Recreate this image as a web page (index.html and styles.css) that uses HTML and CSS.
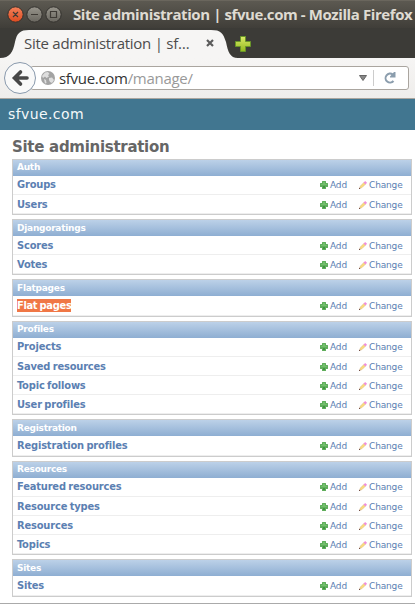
FILE: index.html
```html
<!DOCTYPE html>
<html lang="en">
<head>
<meta charset="utf-8">
<title>Site administration | sfvue.com</title>
<link rel="stylesheet" href="styles.css">
</head>
<body>
<svg class="defs" width="0" height="0">
  <symbol id="add" viewBox="0 0 8 8">
    <path fill="#5fad5b" d="M2.500 0h3q.5 0 .5.500V2h1.500q.5 0 .5.500v3q0 .5-.5.500H6v1.500q0 .5-.5.500h-3Q2 8 2 7.500V6H.5Q0 6 0 5.500v-3Q0 2 .5 2H2V.5q0-.5.5-.5z"/>
    <path fill="#72bf6b" d="M3 1h2v2h2v1H1V3h2z"/>
    <path fill="#429541" d="M3 5h2v2H3z"/>
  </symbol>
  <symbol id="change" viewBox="0 0 8 8">
    <path d="M.8 7.200 1.400 5 5 1.400 6.600 3 3 6.600z" fill="#fbdc7c" stroke="#d5b17a" stroke-width=".5"/>
    <path d="M4.600 1.500 6.200 0 8 1.800 6.500 3.400z" fill="#ef8fdc"/>
    <path d="M0 8V6.500L1.500 8z" fill="#61362c"/>
  </symbol>
</svg>
<header class="titlebar">
  <svg class="controls" width="62" height="28" viewBox="0 0 62 28">
    <defs><linearGradient id="red" x2="0" y2="1"><stop stop-color="#f4815a"/><stop offset="1" stop-color="#dd4b20"/></linearGradient>
    <linearGradient id="gray" x2="0" y2="1"><stop stop-color="#98958c"/><stop offset="1" stop-color="#69665f"/></linearGradient></defs>
    <g stroke="#33312d"><circle cx="15.500" cy="14.500" r="7.700" fill="url(#red)"/><circle cx="34.500" cy="14.500" r="7.700" fill="url(#gray)"/><circle cx="53.500" cy="14.500" r="7.700" fill="url(#gray)"/></g>
    <path d="m13 12 5 5m0-5-5 5M31 14.500h7M50.500 11.500h6v6h-6z" fill="none" stroke="#3e3a35" stroke-width="1.200"/>
  </svg>
  <span class="window-title">Site administration | sfvue.com - Mozilla Firefox</span>
</header>
<div class="tabs">
  <div class="tab">
    <svg class="tab-shape" width="238" height="30" viewBox="0 0 238 30"><path d="M0 30C10 30 13 24 15 14 17 5 20 2 29 2H211C221 2 223 5 226 14 228 24 230 30 238 30z" fill="#f6f5f4"/></svg>
    <div class="tab-content"><span class="tab-title">Site administration | sf…</span>
      <svg width="8" height="8" viewBox="0 0 8 8"><path d="m1 1 6 6m0-6-6 6" stroke="#5b5b5b" stroke-width="2.200"/></svg></div>
  </div>
  <svg class="new-tab" width="16" height="16" viewBox="0 0 16 16"><defs><linearGradient id="lime" x2="0" y2="1"><stop stop-color="#dceb69"/><stop offset="1" stop-color="#91b91d"/></linearGradient></defs><path d="M5.500.5h5v5h5v5h-5v5h-5v-5h-5v-5h5z" fill="url(#lime)" stroke="#689529"/></svg>
</div>
<nav class="toolbar">
  <svg class="back" width="32" height="32" viewBox="0 0 32 32"><circle cx="16" cy="16" r="15.500" fill="#f9f9f9" stroke="#8999ac"/><path d="M11 16h12M16.500 10l-6 6 6 6" fill="none" stroke="#484848" stroke-width="3.600" stroke-linecap="round"/></svg>
  <div class="url">
    <svg width="14" height="14" viewBox="0 0 14 14"><circle cx="7" cy="7" r="7" fill="#a3a3a3"/><path d="M4 1.500 7 1l1.500 2L7 4l1 1.500L5.500 7 4 5.500 2 7 1 5zM8 7l3-.5L13 9l-2 3-2-1-1-2zM3 8l2 1 .5 3L4 12.500z" fill="#dedede"/></svg>
    <span class="address">sfvue.com<i>/manage/</i></span>
    <svg class="drop" width="8" height="6" viewBox="0 0 8 6"><path d="M.5.5h7L4 5.500z" fill="#888" stroke="#666"/></svg>
    <svg class="reload" width="12" height="12" viewBox="0 0 12 12"><path d="M9.500 9A4.500 4.500 0 1 1 8.800 2.500" fill="none" stroke="#8b9dad" stroke-width="2"/><path d="M11.500 0v5.500H6V4.500L10 0z" fill="#8b9dad"/></svg>
  </div>
</nav>
<div class="brand">sfvue.com</div>
<main>
  <h1>Site administration</h1>
  <section class="snug"><h2>Auth</h2>
    <div class="row"><b>Groups</b><a class="add"><svg><use href="#add"/></svg>Add</a><a><svg><use href="#change"/></svg>Change</a></div>
    <div class="row"><b>Users</b><a class="add"><svg><use href="#add"/></svg>Add</a><a><svg><use href="#change"/></svg>Change</a></div>
  </section>
  <section><h2>Djangoratings</h2>
    <div class="row"><b>Scores</b><a class="add"><svg><use href="#add"/></svg>Add</a><a><svg><use href="#change"/></svg>Change</a></div>
    <div class="row"><b>Votes</b><a class="add"><svg><use href="#add"/></svg>Add</a><a><svg><use href="#change"/></svg>Change</a></div>
  </section>
  <section class="single"><h2>Flatpages</h2>
    <div class="row"><b class="selected">Flat pages</b><a class="add"><svg><use href="#add"/></svg>Add</a><a><svg><use href="#change"/></svg>Change</a></div>
  </section>
  <section class="snug"><h2>Profiles</h2>
    <div class="row"><b>Projects</b><a class="add"><svg><use href="#add"/></svg>Add</a><a><svg><use href="#change"/></svg>Change</a></div>
    <div class="row"><b>Saved resources</b><a class="add"><svg><use href="#add"/></svg>Add</a><a><svg><use href="#change"/></svg>Change</a></div>
    <div class="row"><b>Topic follows</b><a class="add"><svg><use href="#add"/></svg>Add</a><a><svg><use href="#change"/></svg>Change</a></div>
    <div class="row"><b>User profiles</b><a class="add"><svg><use href="#add"/></svg>Add</a><a><svg><use href="#change"/></svg>Change</a></div>
  </section>
  <section class="single"><h2>Registration</h2>
    <div class="row"><b>Registration profiles</b><a class="add"><svg><use href="#add"/></svg>Add</a><a><svg><use href="#change"/></svg>Change</a></div>
  </section>
  <section class="snug"><h2>Resources</h2>
    <div class="row"><b>Featured resources</b><a class="add"><svg><use href="#add"/></svg>Add</a><a><svg><use href="#change"/></svg>Change</a></div>
    <div class="row"><b>Resource types</b><a class="add"><svg><use href="#add"/></svg>Add</a><a><svg><use href="#change"/></svg>Change</a></div>
    <div class="row"><b>Resources</b><a class="add"><svg><use href="#add"/></svg>Add</a><a><svg><use href="#change"/></svg>Change</a></div>
    <div class="row"><b>Topics</b><a class="add"><svg><use href="#add"/></svg>Add</a><a><svg><use href="#change"/></svg>Change</a></div>
  </section>
  <section class="single"><h2>Sites</h2>
    <div class="row"><b>Sites</b><a class="add"><svg><use href="#add"/></svg>Add</a><a><svg><use href="#change"/></svg>Change</a></div>
  </section>
</main>
</body>
</html>
```
FILE: styles.css
```css
* { box-sizing: border-box; }
body { margin: 0; height: 604px; overflow: hidden; display: flex; flex-direction: column; background: #fff; font-family: "DejaVu Sans", sans-serif; border-bottom: 1px solid #aaa; }
svg { display: block; flex: none; }
.defs { position: absolute; }
.titlebar { height: 28px; flex: none; display: flex; align-items: center; background: linear-gradient(#5c5951, #403e39); border-top: 1px solid #6a665d; white-space: nowrap; }
.controls { margin-top: -1px; }
.window-title { margin-left: 11px; margin-top: -2px; color: #dfdbd2; font: bold 15px/28px "Open Sans", sans-serif; letter-spacing: -.41px; }
.tabs { height: 30px; flex: none; display: flex; background: #3c3b37; }
.tab { display: grid; width: 235px; }
.tab-shape, .tab-content { grid-area: 1 / 1; }
.tab-content { display: flex; align-items: center; justify-content: space-between; padding: 1px 21px 1px 24px; color: #4c4c4c; font: 15px/26px "Open Sans", sans-serif; letter-spacing: -.27px; white-space: nowrap; }
.tab-content svg { margin-right: 3px; }
.new-tab { margin-top: 8px; }
.toolbar { height: 41px; flex: none; display: flex; align-items: center; padding: 0 6px 1px 4px; background: linear-gradient(#f6f5f4, #efedeb); border-bottom: 1px solid #aaa59e; }
.back { z-index: 1; }
.url { flex: 1; height: 24px; margin-left: -6px; display: flex; align-items: center; padding: 0 12px 0 10px; background: #fff; border: 1px solid #aaa59f; border-radius: 3px; }
.address { flex: 1; margin-left: 4px; color: #333; font: 15px/22px "Open Sans", sans-serif; letter-spacing: -.3px; }
.address i { color: #999; font-style: normal; }
.drop { margin-right: 6px; }
.reload { box-sizing: content-box; border-left: 1px solid #ccc; padding: 2px 0 2px 10px; }
.brand { height: 31px; flex: none; padding-left: 8px; background: #417690; color: #f4f9fa; font-size: 14px; line-height: 31px; letter-spacing: .4px; }
main { padding: 8px 3px 0 12px; }
h1 { margin: 0; height: 21px; color: #666; font-size: 15px; line-height: 18px; letter-spacing: -.29px; }
section { margin-bottom: 4px; border: 1px solid #ccc; }
h2 { margin: 0; height: 16px; padding-left: 4px; background: linear-gradient(#bcd1e8, #8eaed2); color: #fff; font-size: 9px; line-height: 17px; letter-spacing: -.25px; }
.snug h2 { line-height: 15px; }
.row { height: 19px; display: flex; align-items: center; padding: 0 8px 0 4px; border-bottom: 1px solid #eee; color: #5b80b2; font-size: 11px; }
.single .row { height: 20px; }
b { font: bold 11px/13px "DejaVu Sans Condensed", "DejaVu Sans", sans-serif; letter-spacing: -.17px; word-spacing: -.8px; }
.selected { background: #f07746; color: #fff; letter-spacing: -.32px; }
.row a { display: flex; align-items: center; width: 44px; margin-top: 1px; font-size: 9px; line-height: 12px; letter-spacing: -.15px; }
.row .add { width: 27px; margin: 1px 12px 0 auto; }
.single .row a { margin-top: 0; }
.snug .row:nth-child(2) b { margin-top: -2px; }
.snug .row:nth-child(2) a { margin-top: -1px; }
.row a svg { width: 8px; height: 8px; margin-right: 2px; }
```
